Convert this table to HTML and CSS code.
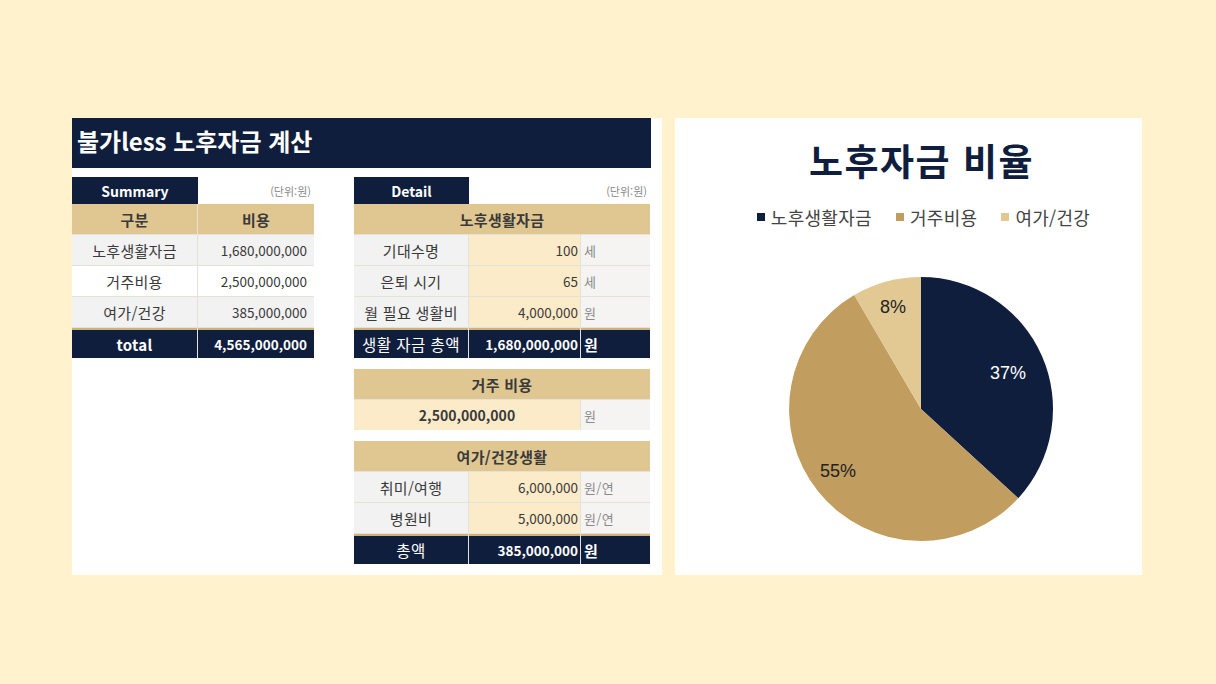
FILE: index.html
```html
<!DOCTYPE html>
<html lang="ko">
<head>
<meta charset="utf-8">
<title>불가less 노후자금 계산</title>
<link rel="stylesheet" href="styles.css">
</head>
<body>
<main class="sheet">
  <section class="calc">
    <h1 class="calc-title">불가less 노후자금 계산</h1>
    <div class="calc-body">
      <div class="summary">
        <div class="cap"><span class="cap-tab">Summary</span><span class="unit-note">(단위:원)</span></div>
        <div class="grid sum-grid">
          <div class="c head">구분</div><div class="c head">비용</div>
          <div class="c gray">노후생활자금</div><div class="c gray num">1,680,000,000</div>
          <div class="c white">거주비용</div><div class="c white num">2,500,000,000</div>
          <div class="c gray">여가/건강</div><div class="c gray num">385,000,000</div>
          <div class="c tot bold">total</div><div class="c tot bold num">4,565,000,000</div>
        </div>
      </div>
      <div class="detail">
        <div class="block">
          <div class="cap"><span class="cap-tab">Detail</span><span class="unit-note">(단위:원)</span></div>
          <div class="grid det-grid">
            <div class="c head span">노후생활자금</div>
            <div class="c gray">기대수명</div><div class="c cream num">100</div><div class="c unit">세</div>
            <div class="c gray">은퇴 시기</div><div class="c cream num">65</div><div class="c unit">세</div>
            <div class="c gray">월 필요 생활비</div><div class="c cream num">4,000,000</div><div class="c unit">원</div>
            <div class="c tot lbl">생활 자금 총액</div><div class="c tot bold num">1,680,000,000</div><div class="c tot bold left">원</div>
          </div>
        </div>
        <div class="grid det-grid">
          <div class="c head span">거주 비용</div>
          <div class="c cream bold span2">2,500,000,000</div><div class="c unit">원</div>
        </div>
        <div class="grid det-grid">
          <div class="c head span">여가/건강생활</div>
          <div class="c gray">취미/여행</div><div class="c cream num">6,000,000</div><div class="c unit">원/연</div>
          <div class="c gray">병원비</div><div class="c cream num">5,000,000</div><div class="c unit">원/연</div>
          <div class="c tot lbl">총액</div><div class="c tot bold num">385,000,000</div><div class="c tot bold left">원</div>
        </div>
      </div>
    </div>
  </section>
  <section class="chart">
    <h2 class="chart-title">노후자금 비율</h2>
    <ul class="legend">
      <li><span class="sw sw-navy"></span>노후생활자금</li>
      <li><span class="sw sw-gold"></span>거주비용</li>
      <li><span class="sw sw-light"></span>여가/건강</li>
    </ul>
    <svg class="pie" width="467" height="330" viewBox="0 0 467 330">
      <path d="M246,182 L246,50 A132,132 0 0 1 343.3,271.2 Z" fill="#0f1e3c"/>
      <path d="M246,182 L343.3,271.2 A132,132 0 1 1 179.2,68.1 Z" fill="#c19d5f"/>
      <path d="M246,182 L179.2,68.1 A132,132 0 0 1 246,50 Z" fill="#e2c994"/>
      <text x="333" y="152" class="pct pct-w">37%</text>
      <text x="163" y="250" class="pct">55%</text>
      <text x="218" y="86" class="pct">8%</text>
    </svg>
  </section>
</main>
</body>
</html>
```
FILE: styles.css
```css
* { box-sizing: border-box; }
body {
  margin: 0;
  background: #fff2cc;
  font-family: "Noto Sans CJK KR", "Noto Sans", sans-serif;
  color: #3a3a3a;
}
.sheet {
  display: flex;
  gap: 13px;
  padding: 118px 0 0 72px;
}
.calc {
  width: 590px;
  height: 457px;
  background: #fff;
}
.calc-title {
  margin: 0;
  width: 579px;
  height: 50px;
  background: #0f1e3c;
  color: #fff;
  font-size: 24px;
  font-weight: 700;
  line-height: 46px;
  padding-left: 5px;
}
.calc-body {
  display: flex;
  gap: 40px;
  padding-top: 9px;
}
.summary { width: 242px; }
.detail {
  width: 296px;
  display: flex;
  flex-direction: column;
  gap: 11px;
}
.cap {
  display: flex;
  justify-content: space-between;
  align-items: center;
  height: 27px;
}
.cap-tab {
  height: 27px;
  line-height: 28px;
  background: #0f1e3c;
  color: #fff;
  font-weight: 700;
  font-size: 14px;
  text-align: center;
}
.summary .cap-tab { width: 126px; }
.detail .cap-tab { width: 115px; }
.unit-note {
  font-size: 11px;
  color: #8a8a8a;
  padding-right: 3px;
}
.grid {
  display: grid;
  gap: 1px;
  background: #e4e1da;
  grid-auto-rows: 30px;
}
.sum-grid { grid-template-columns: 125px 116px; }
.det-grid { grid-template-columns: 114px 111px 69px; }
.c {
  display: flex;
  align-items: center;
  justify-content: center;
  font-size: 15px;
  padding: 0 3px;
  white-space: nowrap;
  letter-spacing: 0.3px;
}
.head {
  background: #e0c792;
  font-weight: 700;
  color: #3a3a3a;
}
.span { grid-column: 1 / -1; }
.span2 { grid-column: 1 / 3; }
.num { justify-content: flex-end; font-size: 13.5px; letter-spacing: 0; padding-right: 2px; }
.sum-grid .num { padding-right: 7px; }
.left { justify-content: flex-start; }
.unit {
  justify-content: flex-start;
  color: #8a8a8a;
  font-size: 13px;
  background: #f5f4f2;
}
.gray { background: #f2f2f2; }
.white { background: #fff; }
.cream { background: #fcebc9; }
.bold { font-weight: 700; }
.cream.bold { font-size: 14px; letter-spacing: 0; }
.tot {
  background: #0f1e3c;
  color: #fff;
  border-top: 2px solid #cdb07a;
}
.lbl { font-size: 15.5px; letter-spacing: 0.5px; }
.chart {
  width: 467px;
  height: 457px;
  background: #fff;
  display: flex;
  flex-direction: column;
  align-items: center;
}
.chart-title {
  margin: 21px 0 0 26px;
  font-size: 37px;
  font-weight: 700;
  color: #0f1e3c;
  line-height: 42px;
  letter-spacing: 1.5px;
}
.legend {
  list-style: none;
  margin: 26px 0 0 30px;
  padding: 0;
  display: flex;
  gap: 24px;
  font-size: 18px;
  line-height: 20px;
  color: #444;
  letter-spacing: 0.3px;
}
.legend li {
  display: flex;
  align-items: center;
}
.sw {
  width: 8px;
  height: 8px;
  margin-right: 6px;
}
.sw-navy { background: #0f1e3c; }
.sw-gold { background: #c19d5f; }
.sw-light { background: #e2c994; }
.pie { display: block; align-self: flex-start; }
.pct {
  font-family: "Liberation Sans", Arial, sans-serif;
  font-size: 18px;
  fill: #222;
  text-anchor: middle;
}
.pct-w { fill: #fff; }
```
